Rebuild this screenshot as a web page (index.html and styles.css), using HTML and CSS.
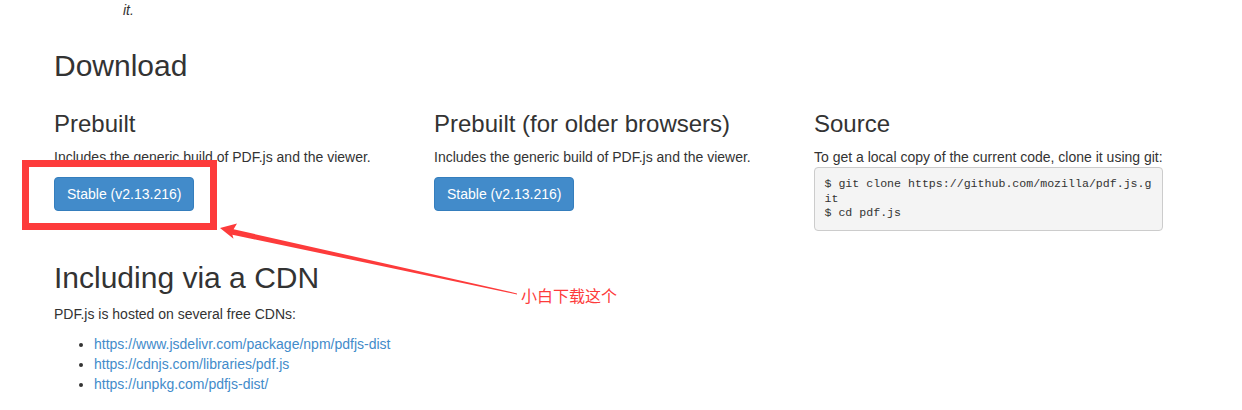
FILE: index.html
```html
<!DOCTYPE html>
<html lang="en">
<head>
<meta charset="utf-8">
<title>PDF.js - Download</title>
<link rel="stylesheet" href="styles.css">
</head>
<body>
<div class="page">
  <p class="tail"><em>it.</em></p>

  <h2 class="title first">Download</h2>
  <div class="row">
    <div class="col">
      <h3 class="sub">Prebuilt</h3>
      <p class="text">Includes the generic build of PDF.js and the viewer.</p>
      <a class="btn" href="#">Stable (v2.13.216)</a>
    </div>
    <div class="col">
      <h3 class="sub">Prebuilt (for older browsers)</h3>
      <p class="text">Includes the generic build of PDF.js and the viewer.</p>
      <a class="btn" href="#">Stable (v2.13.216)</a>
    </div>
    <div class="col">
      <h3 class="sub">Source</h3>
      <p class="text lead-in">To get a local copy of the current code, clone it using git:</p>
      <pre class="code">$ git clone https://github.com/mozilla/pdf.js.git
$ cd pdf.js</pre>
    </div>
  </div>

  <h2 class="title second">Including via a CDN</h2>
  <p class="text">PDF.js is hosted on several free CDNs:</p>
  <ul class="links">
    <li><a href="#">https://www.jsdelivr.com/package/npm/pdfjs-dist</a></li>
    <li><a href="#">https://cdnjs.com/libraries/pdf.js</a></li>
    <li><a href="#">https://unpkg.com/pdfjs-dist/</a></li>
  </ul>
</div>

<div class="mark-box"></div>
<svg class="mark-arrow" width="1242" height="410" viewBox="0 0 1242 410">
  <polygon fill="#fd3b3b" points="220,228 237,223.5 233.6,229.3 517,293.4 517,294.4 232.4,234.7 233.5,238.8"/>
</svg>
<div class="mark-note">小白下载这个</div>
</body>
</html>
```

FILE: styles.css
```css
html, body {
  margin: 0;
  padding: 0;
  background: #fff;
}

body {
  font-family: "Liberation Sans", Arial, Helvetica, sans-serif;
  font-size: 14px;
  line-height: 20px;
  color: #333;
  width: 1242px;
  height: 410px;
  overflow: hidden;
  position: relative;
}

.page {
  padding-left: 54px;
}

.tail {
  margin: 0;
  padding-left: 69px;
  font-size: 14px;
  line-height: 20px;
  height: 20px;
}

.title {
  font-size: 30px;
  font-weight: 400;
  line-height: 33px;
  margin: 0 0 10px;
  color: #333;
}

.title.first {
  margin-top: 29px;
}

.title.second {
  margin-top: 20px;
}

.row {
  display: grid;
  grid-template-columns: 350px 350px 350px;
  column-gap: 30px;
  padding-bottom: 10px;
}

.sub {
  font-size: 24px;
  font-weight: 400;
  line-height: 26.4px;
  margin: 18.5px 0 10px;
  color: #333;
}

.text {
  margin: 0 0 10px;
  font-size: 14px;
  line-height: 20px;
}

.text.lead-in {
  margin-bottom: 0;
}

.btn {
  display: inline-block;
  height: 34px;
  box-sizing: border-box;
  padding: 0 12px;
  font-size: 14px;
  line-height: 32px;
  color: #fff;
  text-decoration: none;
  background: #428bca;
  border: 1px solid #357ebd;
  border-radius: 4px;
}

.code {
  margin: 0;
  width: 349px;
  box-sizing: border-box;
  padding: 9.5px;
  font-family: "Liberation Mono", "Courier New", monospace;
  font-size: 11.6px;
  line-height: 14.3px;
  color: #333;
  background: #f4f4f4;
  border: 1px solid #ccc;
  border-radius: 4px;
  white-space: pre-wrap;
  word-break: break-all;
}

.links {
  margin: 0;
  padding-left: 40px;
}

.links li {
  line-height: 20px;
}

.links a {
  color: #428bca;
  text-decoration: none;
}

.mark-box {
  position: absolute;
  left: 22px;
  top: 160px;
  width: 181px;
  height: 56px;
  border: 7px solid #fd3b3b;
}

.mark-arrow {
  position: absolute;
  left: 0;
  top: 0;
  pointer-events: none;
}

.mark-note {
  position: absolute;
  left: 521px;
  top: 287px;
  font-family: "Noto Sans CJK SC", sans-serif;
  font-size: 16px;
  line-height: 16px;
  color: #fd3b3b;
}
```
